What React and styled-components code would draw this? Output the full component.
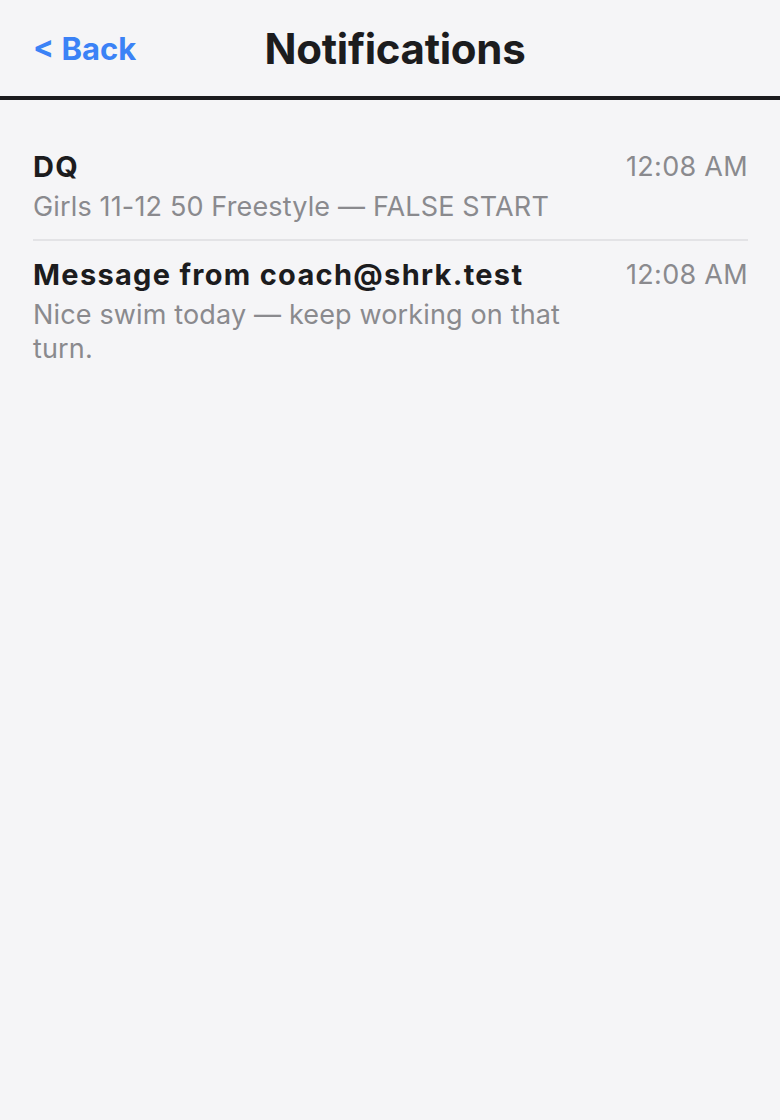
import React from 'react';
import styled, { createGlobalStyle } from 'styled-components';

const GlobalStyle = createGlobalStyle`
  html, body {
    margin: 0;
    padding: 0;
    background: #f5f5f7;
  }
  body {
    font-family: Inter, "Noto Sans", sans-serif;
    color: #1c1c1e;
  }
`;

const notifications = [
  {
    id: 1,
    title: 'DQ',
    body: 'Girls 11-12 50 Freestyle — FALSE START',
    time: '12:08 AM',
  },
  {
    id: 2,
    title: 'Message from coach@shrk.test',
    body: 'Nice swim today — keep working on that turn.',
    time: '12:08 AM',
  },
];

const App = () => {
  return (
    <>
      <GlobalStyle />
      <Screen>
        <Header>
          <BackButton type="button">&lt; Back</BackButton>
          <Title>Notifications</Title>
        </Header>
        <List>
          {notifications.map((n) => (
            <Row key={n.id}>
              <Content>
                <RowTitle>{n.title}</RowTitle>
                <RowBody>{n.body}</RowBody>
              </Content>
              <Time>{n.time}</Time>
            </Row>
          ))}
        </List>
      </Screen>
    </>
  );
};

export default App;

const Screen = styled.div`
  min-height: 1120px;
  background: #f5f5f7;
`;

const Header = styled.header`
  position: relative;
  height: 96px;
  display: flex;
  align-items: center;
  justify-content: center;
  border-bottom: 4px solid #1c1c1e;
  padding: 0 23px 0 33px;
`;

const BackButton = styled.button`
  position: absolute;
  left: 33px;
  top: 50%;
  transform: translateY(-50%);
  background: none;
  border: none;
  padding: 0;
  font-family: inherit;
  font-size: 31px;
  font-weight: 700;
  color: #3b82f6;
  cursor: pointer;
`;

const Title = styled.h1`
  margin: 0;
  font-size: 42px;
  font-weight: 700;
  letter-spacing: -0.3px;
  color: #1c1c1e;
`;

const List = styled.div`
  padding: 23px 32px 0 33px;
`;

const Row = styled.div`
  display: flex;
  justify-content: space-between;
  gap: 24px;
  padding: 26px 0 15px;
  border-bottom: 2px solid #e3e3e6;

  &:last-child {
    border-bottom: none;
    padding-top: 16px;
  }
`;

const Content = styled.div`
  flex: 1;
  min-width: 0;
  max-width: 560px;
`;

const RowTitle = styled.div`
  font-size: 29px;
  font-weight: 700;
  line-height: 36px;
  letter-spacing: 1.3px;
  color: #1c1c1e;
`;

const RowBody = styled.div`
  margin-top: 5px;
  font-size: 27px;
  line-height: 34px;
  letter-spacing: 0.15px;
  color: #8a8a8e;
`;

const Time = styled.div`
  flex-shrink: 0;
  font-size: 27px;
  line-height: 36px;
  letter-spacing: 0.3px;
  color: #8a8a8e;
`;
